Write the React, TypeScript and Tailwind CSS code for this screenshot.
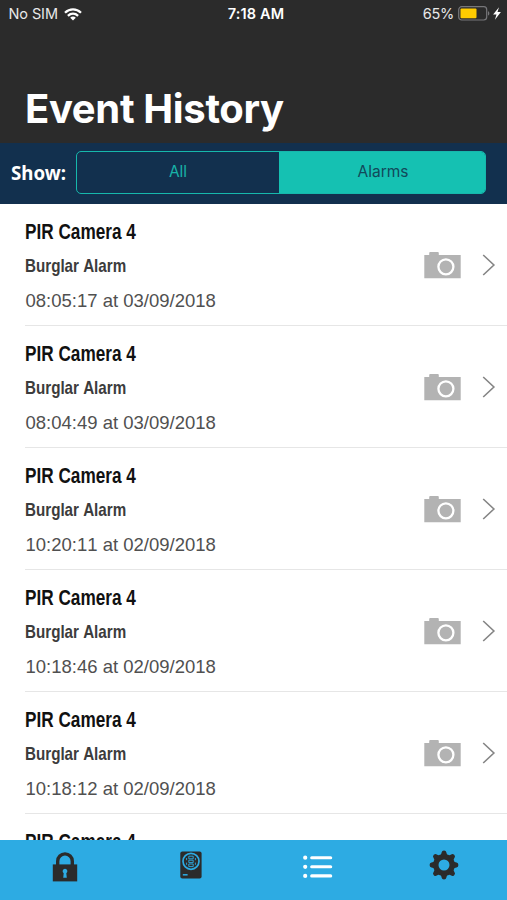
interface HistoryEvent {
  device: string;
  type: string;
  time: string;
}

const events: HistoryEvent[] = [
  { device: "PIR Camera 4", type: "Burglar Alarm", time: "08:05:17 at 03/09/2018" },
  { device: "PIR Camera 4", type: "Burglar Alarm", time: "08:04:49 at 03/09/2018" },
  { device: "PIR Camera 4", type: "Burglar Alarm", time: "10:20:11 at 02/09/2018" },
  { device: "PIR Camera 4", type: "Burglar Alarm", time: "10:18:46 at 02/09/2018" },
  { device: "PIR Camera 4", type: "Burglar Alarm", time: "10:18:12 at 02/09/2018" },
  { device: "PIR Camera 4", type: "", time: "" },
];

function WifiIcon() {
  return (
    <svg width="18" height="13" viewBox="0 0 18 13" fill="none" stroke="#fff" strokeWidth="2.3">
      <path d="M1 4.8C5.6.3 12.4.3 17 4.8" />
      <path d="M3.9 7.8c3-2.8 7.2-2.8 10.2 0" />
      <path d="M6.2 9.7c1.6-1.5 4-1.5 5.6 0L9 12.6z" fill="#fff" stroke="none" />
    </svg>
  );
}

function BatteryIcon() {
  return (
    <svg width="44" height="16" viewBox="0 0 44 16">
      <rect x="0.7" y="0.7" width="28" height="13.3" rx="3" fill="none" stroke="#77777a" strokeWidth="1.2" />
      <rect x="2.5" y="2.5" width="16" height="9.7" rx="1" fill="#ffcc00" />
      <path d="M30 5.2c1.8.6 1.8 3.8 0 4.4z" fill="#77777a" />
      <path d="M41 1.3 35.1 8.4h3.4l-1.6 5.4 6-7.7h-3.4z" fill="#fff" />
    </svg>
  );
}

function CameraIcon() {
  return (
    <svg width="37" height="28" viewBox="0 0 37 28">
      <path d="M.3 4h4.9V2q0-1 1-1h7.6q1 0 1 1v2h21.9v23.3H.3z" fill="#b3b3b3" />
      <circle cx="21.9" cy="15.8" r="7.5" fill="none" stroke="#fff" strokeWidth="2.3" />
    </svg>
  );
}

function LockIcon() {
  return (
    <svg width="26" height="30" viewBox="0 0 26 30">
      <path d="M5.7 13V9.2a7.3 7.3 0 0 1 14.6 0V13" fill="none" stroke="#2b2b2b" strokeWidth="3.4" />
      <path d="M.8 12.4h24.4v17H.8z" fill="#2b2b2b" />
      <path d="M13 16.8a2.4 2.4 0 0 0-1.3 4.4l-.5 4.6h3.6l-.5-4.6a2.4 2.4 0 0 0-1.3-4.4z" fill="#2dabe3" />
    </svg>
  );
}

function DetectorIcon() {
  return (
    <svg width="22" height="28" viewBox="0 0 22 28">
      <rect x="0.3" y="0.4" width="21.3" height="27" rx="2" fill="#2b2b2b" />
      <circle cx="11" cy="10.3" r="8" fill="none" stroke="#2dabe3" strokeWidth="1.7" />
      <g fill="none" stroke="#2dabe3" strokeWidth="0.9">
        <path d="M8.8 5.2h4.4v2.6H8.8zM8.8 9.2h4.4v2.4H8.8zM8.8 13h4.4v2.6H8.8z" />
        <path d="M6.6 7v2.2M15.4 7v2.2M6.6 11.6v2.2M15.4 11.6v2.2" />
      </g>
      <path d="M2.8 23.8h4.8" stroke="#2dabe3" strokeWidth="1.5" />
    </svg>
  );
}

function ListIcon() {
  return (
    <svg width="30" height="24" viewBox="0 0 30 24" stroke="#fff" strokeLinecap="round">
      <path d="M2.2 2.7h.01M2.2 11.8h.01M2.2 20.9h.01" strokeWidth="4.2" />
      <path d="M8.7 2.7h19M8.7 11.8h19M8.7 20.9h19" strokeWidth="3.1" />
    </svg>
  );
}

function GearIcon() {
  return (
    <svg width="30" height="30" viewBox="0 0 30 30">
      <circle cx="15" cy="15" r="8.2" fill="none" stroke="#2b2b2b" strokeWidth="5.4" />
      <g fill="#2b2b2b">
        {[0, 45, 90, 135, 180, 225, 270, 315].map((angle) => (
          <path
            key={angle}
            d="M11.5 6.2 12.6 2.5q.3-1.9 2.4-1.9t2.4 1.9l1.1 3.7z"
            transform={`rotate(${angle} 15 15)`}
          />
        ))}
      </g>
    </svg>
  );
}

function EventRow({ device, type, time }: HistoryEvent) {
  return (
    <li className="ml-[25px] flex h-[122.2px] shrink-0 items-center border-b border-[#e6e6e6] font-['Liberation_Sans',sans-serif] [font-kerning:none]">
      <div className="flex h-full flex-1 flex-col pt-[14px] whitespace-nowrap">
        <span className="h-[32px] origin-left scale-x-[0.8] text-[21.5px] leading-[28px] font-bold text-[#111]">
          {device}
        </span>
        <span className="h-[36px] origin-left scale-x-[0.82] text-[18.5px] leading-[32px] font-bold text-[#3c3c3c]">
          {type}
        </span>
        <span className="pl-[0.5px] text-[18.5px] leading-[30px] text-[#505050]">{time}</span>
      </div>
      <div className="flex items-center pt-px pr-[11px]">
        <CameraIcon />
        <svg className="ml-[21px]" width="14" height="22" viewBox="0 0 14 22">
          <path d="m1.2 1 10.7 10L1.2 21" fill="none" stroke="#858585" strokeWidth="1.6" />
        </svg>
      </div>
    </li>
  );
}

export default function App() {
  return (
    <div className="flex h-[900px] w-[507px] flex-col overflow-hidden bg-white font-['Inter',sans-serif]">
      <header className="flex h-[143px] shrink-0 flex-col justify-between bg-[#2b2b2b] text-white">
        <div className="grid h-[28px] grid-cols-3 items-center text-[14.5px]">
          <div className="flex items-center gap-[6px] pl-[8.5px]">
            <span className="tracking-[-0.1px] text-[#e8e8e8]">No SIM</span>
            <WifiIcon />
          </div>
          <span className="pl-[5px] text-center font-semibold tracking-[0.15px]">7:18 AM</span>
          <div className="flex items-center justify-end gap-[4px] pr-[5px]">
            <span className="tracking-[-0.3px] text-[#e8e8e8]">65%</span>
            <BatteryIcon />
          </div>
        </div>
        <h1 className="pb-[10px] pl-[25px] text-[40px] leading-[48px] font-bold tracking-[-0.35px]">Event History</h1>
      </header>

      <div className="flex h-[60.5px] shrink-0 items-center bg-[#12304e] pr-[21px] pb-px pl-[11px]">
        <span className="w-[65px] font-['Noto_Sans',sans-serif] text-[18.7px] font-bold text-white">Show:</span>
        <div className="flex h-[43px] flex-1 overflow-hidden rounded-[5px] border-[1.5px] border-[#16b8ac] text-[15.5px]">
          <button className="w-[202px] pb-[2px] text-[#18b3a8]">All</button>
          <button className="flex-1 bg-[#15c1b2] pb-[2px] pl-[2px] text-[#12495a]">Alarms</button>
        </div>
      </div>

      <ul className="flex min-h-0 flex-1 flex-col overflow-hidden">
        {events.map((event, i) => (
          <EventRow key={i} {...event} />
        ))}
      </ul>

      <nav className="grid h-[60px] shrink-0 grid-cols-4 justify-items-center bg-[#2dabe3] pl-[2px]">
        <div className="pt-[12px] pr-px"><LockIcon /></div>
        <div className="pt-[11px]"><DetectorIcon /></div>
        <div className="pt-[15px]"><ListIcon /></div>
        <div className="pt-[10px]"><GearIcon /></div>
      </nav>
    </div>
  );
}
